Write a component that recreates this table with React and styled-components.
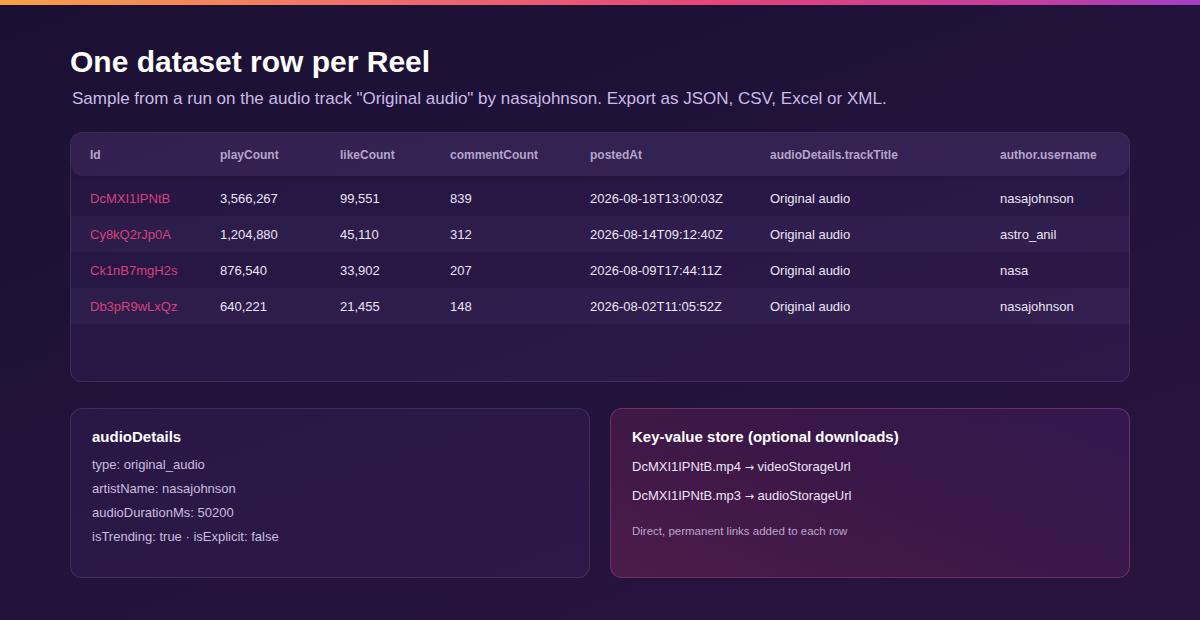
import React from "react";
import styled, { createGlobalStyle } from "styled-components";

const Global = createGlobalStyle`
  html, body { margin: 0; padding: 0; }
  body {
    width: 1200px;
    height: 620px;
    overflow: hidden;
    font-family: "Liberation Sans", Arial, sans-serif;
    background: linear-gradient(160deg, #1b1033 0%, #22133c 55%, #29143f 100%);
    color: #f2ecfa;
  }
`;

const Page = styled.div`
  width: 1200px;
  height: 620px;
  display: flex;
  flex-direction: column;
`;

const TopBar = styled.div`
  height: 5px;
  flex: none;
  background: linear-gradient(90deg, #f7a047 0%, #f0706a 30%, #e5457a 60%, #c43f9c 85%, #a23fc4 100%);
`;

const Main = styled.main`
  padding: 39px 70px 0;
  display: flex;
  flex-direction: column;
`;

const Title = styled.h1`
  margin: 0;
  font-size: 30px;
  line-height: 36px;
  font-weight: 700;
  color: #ffffff;
`;

const Subtitle = styled.p`
  margin: 8px 0 0 2px;
  font-size: 17px;
  line-height: 22px;
  color: #cbbce6;
`;

const TableCard = styled.section`
  margin-top: 22px;
  height: 250px;
  box-sizing: border-box;
  border: 1px solid rgba(255, 255, 255, 0.1);
  border-radius: 12px;
  background: rgba(150, 100, 220, 0.07);
  overflow: hidden;
`;

const cols = "130px 120px 110px 140px 180px 230px 1fr";

const HeadRow = styled.div`
  display: grid;
  grid-template-columns: ${cols};
  align-items: center;
  height: 43px;
  padding: 0 19px;
  background: rgba(200, 170, 255, 0.08);
  border-radius: 0 0 12px 12px;
  box-shadow: 0 2px 6px rgba(0, 0, 0, 0.12);
`;

const HeadCell = styled.div`
  font-size: 12px;
  font-weight: 700;
  color: #b4a4cb;
  white-space: nowrap;
`;

const Body = styled.div`
  padding-top: 4px;
`;

const Row = styled.div`
  display: grid;
  grid-template-columns: ${cols};
  align-items: center;
  height: 36px;
  padding: 0 19px;
  background: ${(p) => (p.$alt ? "rgba(200, 170, 255, 0.04)" : "transparent")};
`;

const Cell = styled.div`
  font-size: 13px;
  color: ${(p) => (p.$id ? "#d6427f" : "#ece4f6")};
  white-space: nowrap;
`;

const CardGrid = styled.div`
  margin-top: 26px;
  display: grid;
  grid-template-columns: 1fr 1fr;
  gap: 20px;
`;

const Card = styled.section`
  height: 170px;
  box-sizing: border-box;
  padding: 18px 21px;
  border-radius: 12px;
  border: 1px solid ${(p) => (p.$accent ? "rgba(226, 92, 150, 0.32)" : "rgba(255, 255, 255, 0.1)")};
  background: ${(p) =>
    p.$accent
      ? "linear-gradient(30deg, rgba(233, 64, 120, 0.2) 0%, rgba(200, 50, 140, 0.14) 50%, rgba(140, 60, 200, 0.12) 100%)"
      : "rgba(150, 100, 220, 0.07)"};
`;

const CardTitle = styled.h2`
  margin: 0 0 6px;
  font-size: 15px;
  line-height: 20px;
  font-weight: 700;
  color: #ffffff;
`;

const Line = styled.div`
  font-size: 13px;
  line-height: ${(p) => (p.$tall ? "28px" : "24px")};
  color: ${(p) => (p.$tall ? "#ece4f6" : "#cbbdde")};
`;

const Arrow = styled.span`
  font-family: "DejaVu Sans", sans-serif;
  font-size: 11px;
`;

const Note = styled.div`
  margin-top: 12px;
  font-size: 11.5px;
  line-height: 16px;
  color: #bba6cc;
`;

const headers = [
  "Id",
  "playCount",
  "likeCount",
  "commentCount",
  "postedAt",
  "audioDetails.trackTitle",
  "author.username",
];

const rows = [
  ["DcMXI1IPNtB", "3,566,267", "99,551", "839", "2026-08-18T13:00:03Z", "Original audio", "nasajohnson"],
  ["Cy8kQ2rJp0A", "1,204,880", "45,110", "312", "2026-08-14T09:12:40Z", "Original audio", "astro_anil"],
  ["Ck1nB7mgH2s", "876,540", "33,902", "207", "2026-08-09T17:44:11Z", "Original audio", "nasa"],
  ["Db3pR9wLxQz", "640,221", "21,455", "148", "2026-08-02T11:05:52Z", "Original audio", "nasajohnson"],
];

export default function App() {
  return (
    <Page>
      <Global />
      <TopBar />
      <Main>
        <Title>One dataset row per Reel</Title>
        <Subtitle>
          Sample from a run on the audio track "Original audio" by nasajohnson. Export as JSON, CSV, Excel or XML.
        </Subtitle>
        <TableCard>
          <HeadRow>
            {headers.map((h) => (
              <HeadCell key={h}>{h}</HeadCell>
            ))}
          </HeadRow>
          <Body>
            {rows.map((r, i) => (
              <Row key={r[0]} $alt={i % 2 === 1}>
                {r.map((c, j) => (
                  <Cell key={j} $id={j === 0}>
                    {c}
                  </Cell>
                ))}
              </Row>
            ))}
          </Body>
        </TableCard>
        <CardGrid>
          <Card>
            <CardTitle>audioDetails</CardTitle>
            <Line>type: original_audio</Line>
            <Line>artistName: nasajohnson</Line>
            <Line>audioDurationMs: 50200</Line>
            <Line>isTrending: true · isExplicit: false</Line>
          </Card>
          <Card $accent>
            <CardTitle>Key-value store (optional downloads)</CardTitle>
            <Line $tall>DcMXI1IPNtB.mp4 <Arrow>→</Arrow> videoStorageUrl</Line>
            <Line $tall>DcMXI1IPNtB.mp3 <Arrow>→</Arrow> audioStorageUrl</Line>
            <Note>Direct, permanent links added to each row</Note>
          </Card>
        </CardGrid>
      </Main>
    </Page>
  );
}
